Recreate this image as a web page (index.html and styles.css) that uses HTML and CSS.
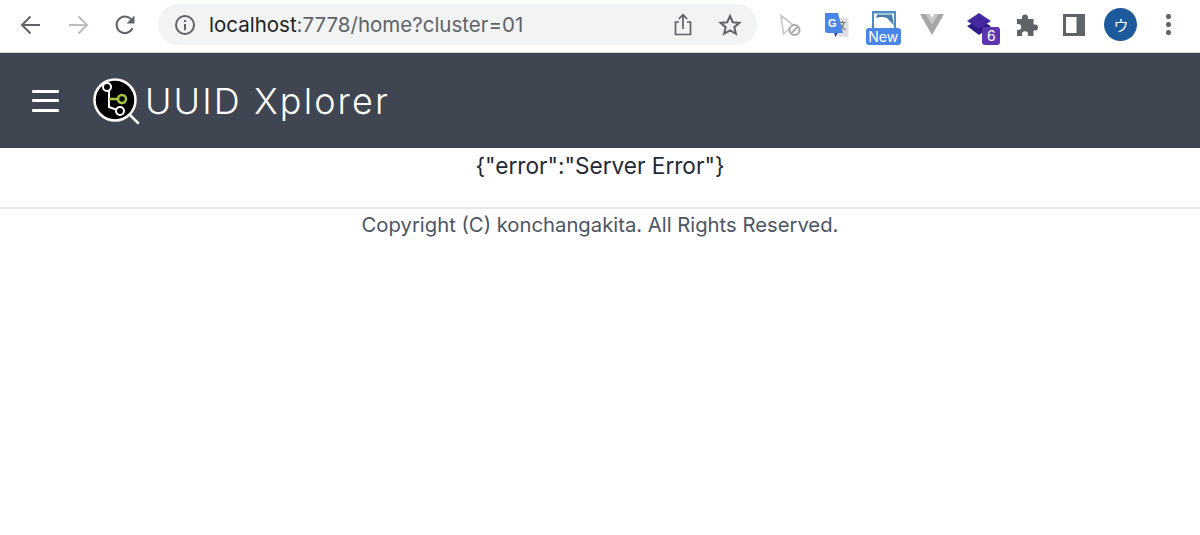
FILE: index.html
```html
<!DOCTYPE html>
<html lang="en">
<head>
    <meta charset="UTF-8">
    <meta name="viewport" content="width=device-width, initial-scale=1.0">
    <title>UUID Xplorer</title>
    <link rel="stylesheet" href="styles.css">
</head>
<body>
    <div class="toolbar">
        <div class="nav-buttons">
            <button class="tool-btn" aria-label="Back">
                <svg width="24" height="24" viewBox="0 0 24 24" fill="none" stroke="#5f6368" stroke-width="2"><path d="M21 12H3.500M11.500 3.500L3 12l8.500 8.500"/></svg>
            </button>
            <button class="tool-btn" aria-label="Forward">
                <svg width="24" height="24" viewBox="0 0 24 24" fill="none" stroke="#b9bbbe" stroke-width="2"><path d="M3 12h17.500M12.500 3.500L21 12l-8.500 8.500"/></svg>
            </button>
            <button class="tool-btn" aria-label="Reload">
                <svg width="24" height="24" viewBox="0 0 24 24" fill="none"><path d="M19.500 15.200A8.300 8.300 0 1 1 18 6.200" stroke="#5f6368" stroke-width="2"/><path d="M21.500 2.500v8h-8z" fill="#5f6368"/></svg>
            </button>
        </div>

        <div class="omnibox">
            <svg class="info-icon" width="22" height="22" viewBox="0 0 22 22" fill="none" stroke="#5f6368"><circle cx="11" cy="11" r="9" stroke-width="2"/><path d="M11 10v6" stroke-width="2"/><path d="M11 6v2" stroke-width="2"/></svg>
            <div class="url"><span class="url-host">localhost</span>:7778/home?cluster=01</div>
            <button class="omni-btn share-btn" aria-label="Share">
                <svg width="20" height="24" viewBox="0 0 20 24" fill="none" stroke="#5f6368" stroke-width="1.700"><path d="M6 9H2.500v12.500h15V9H14"/><path d="M10 16V2M5.800 6L10 1.800 14.200 6"/></svg>
            </button>
            <button class="omni-btn star-btn" aria-label="Bookmark">
                <svg width="24" height="24" viewBox="0 0 24 24" fill="none" stroke="#5f6368" stroke-width="2"><path d="M12 3l2.700 6.200 6.700.6-5.100 4.400 1.600 6.600L12 17.300l-5.900 3.500 1.600-6.600-5.100-4.400 6.700-.6z"/></svg>
            </button>
        </div>

        <div class="extensions">
            <div class="ext">
                <svg width="24" height="24" viewBox="0 0 24 24" fill="none"><path d="M3 2.500L19 15l-7.500.5L5.500 21z" stroke="#c4c6c8" stroke-width="1.600" fill="#fff"/><circle cx="16.500" cy="17" r="5" fill="#fff" stroke="#a8aaad" stroke-width="2"/><path d="M13.500 20l6-6" stroke="#a8aaad" stroke-width="2"/></svg>
            </div>
            <div class="ext">
                <svg width="26" height="26" viewBox="0 0 26 26"><path d="M13 6h11.500v19H15z" fill="#dfe1e3"/><path d="M15.500 10.500h6M18.500 9v1.500M20 10.500c-.8 3.500-2.500 6-5 7.500M17 13c.8 2 2.300 3.800 4.500 5" fill="none" stroke="#777" stroke-width="1.200"/><path d="M1 1h13l5 20H3.500a2.500 2.500 0 0 1-2.500-2.500z" fill="#4a86e8"/><path d="M14 21l-2.500 4.500L10 21z" fill="#3c56b8"/><text class="translate-g" x="4" y="14.500">G</text></svg>
            </div>
            <div class="ext">
                <svg class="slide-icon" width="24" height="18" viewBox="0 0 24 18"><path d="M0 0h24v18H0z" fill="#4f8cc0"/><path d="M2 2.500h20V18H2z" fill="#fff"/><path d="M5 3.500h15l2 11-7-7.500C11 5.500 7 6 4 7z" fill="#4a7ea8"/></svg>
                <span class="new-badge">New</span>
            </div>
            <div class="ext">
                <svg width="24" height="21" viewBox="0 0 24 21"><path d="M0 0h6l6 10L18 0h6L12 21z" fill="#a4a6a8"/><path d="M6 0h3.800L12 4l2.200-4H18l-6 10z" fill="#c6c8ca"/></svg>
            </div>
            <div class="ext">
                <svg class="stack-icon" width="26" height="26" viewBox="0 0 26 26"><path d="M1 14l12-6 12 6-12 9z" fill="#2c1a84"/><path d="M1 9l12-8 12 8-12 8z" fill="#4527a0"/></svg>
                <span class="count-badge">6</span>
            </div>
            <div class="ext">
                <svg class="puzzle-icon" width="24" height="24" viewBox="0 0 24 24"><path d="M9 1.500a3 3 0 0 1 3 3V6h5.500v5.500H19a3 3 0 0 1 0 6h-1.500V23h-5.500v-1.700a3 3 0 0 0-6 0V23H1v-6h1.200a3 3 0 0 0 0-6H1V6h5V4.500a3 3 0 0 1 3-3z" fill="#5f6368"/></svg>
            </div>
            <div class="ext">
                <svg width="22" height="22" viewBox="0 0 22 22"><path d="M0 0h22v22H0z" fill="#5f6368"/><path d="M3 3h10.500v16H3z" fill="#fff"/></svg>
            </div>
            <div class="ext">
                <div class="avatar">ウ</div>
            </div>
            <div class="ext">
                <div class="kebab"><span></span><span></span><span></span></div>
            </div>
        </div>
    </div>

    <header class="app-header">
        <button class="menu-btn" aria-label="Menu"><span></span><span></span><span></span></button>
        <svg class="logo" width="50" height="50" viewBox="0 0 50 50" fill="none">
            <path d="M36 36l10 10" stroke="#fff" stroke-width="2.500" stroke-linecap="round"/>
            <circle cx="23" cy="23" r="20.500" fill="#000" stroke="#fff" stroke-width="2.500"/>
            <path d="M17 12v18l11 4" stroke="#fff" stroke-width="2"/>
            <path d="M17 22h10" stroke="#a5c63b" stroke-width="2.500"/>
            <circle cx="15" cy="10" r="4" fill="#000" stroke="#fff" stroke-width="2"/>
            <circle cx="30" cy="22" r="4" fill="#000" stroke="#a5c63b" stroke-width="2.500"/>
            <circle cx="28" cy="34" r="4" fill="#000" stroke="#fff" stroke-width="2"/>
        </svg>
        <div class="brand">UUID Xplorer</div>
    </header>

    <main class="content">{"error":"Server Error"}</main>
    <footer class="footer">Copyright (C) konchangakita. All Rights Reserved.</footer>
</body>
</html>
```

FILE: styles.css
```css
* {
    margin: 0;
    padding: 0;
    box-sizing: border-box;
}

body {
    font-family: Inter, "Noto Sans", sans-serif;
    background: #fff;
    overflow: hidden;
}

button {
    border: none;
    background: none;
}

.toolbar {
    display: flex;
    align-items: center;
    height: 53px;
    padding-left: 7px;
    padding-bottom: 3px;
    background: #fff;
    border-bottom: 1px solid #d3d5d8;
}

.nav-buttons {
    display: flex;
}

.tool-btn {
    display: flex;
    align-items: center;
    justify-content: center;
    width: 47px;
}

.omnibox {
    display: flex;
    align-items: center;
    width: 599px;
    height: 41px;
    margin-left: 10px;
    margin-right: 9px;
    padding-left: 16px;
    background: #f1f3f4;
    border-radius: 21px;
}

.url {
    flex: 1;
    margin-left: 13px;
    font-size: 20.500px;
    color: #5f6368;
    white-space: nowrap;
}

.url-host {
    color: #202124;
}

.omni-btn {
    display: flex;
    align-items: center;
    justify-content: center;
}

.share-btn {
    width: 20px;
    margin-right: 25px;
}

.star-btn {
    width: 24px;
    margin-right: 15px;
}

.extensions {
    display: flex;
}

.ext {
    position: relative;
    display: flex;
    align-items: center;
    justify-content: center;
    width: 47.33px;
    height: 40px;
}

.translate-g {
    font-family: "Liberation Sans", sans-serif;
    font-size: 11px;
    font-weight: 700;
    fill: #fff;
}

.slide-icon {
    margin-bottom: 9px;
}

.new-badge {
    position: absolute;
    left: 5px;
    top: 23px;
    width: 35px;
    height: 17px;
    background: #4a86e8;
    border-radius: 3px;
    color: #fff;
    font-size: 14px;
    line-height: 17px;
    text-align: center;
}

.count-badge {
    position: absolute;
    left: 27px;
    top: 22px;
    width: 18px;
    height: 18px;
    background: #5e35b1;
    border-radius: 3px;
    color: #fff;
    font-size: 14px;
    line-height: 18px;
    text-align: center;
}

.puzzle-icon {
    margin-left: 3px;
}

.avatar {
    width: 33px;
    height: 33px;
    background: #1c5a9c;
    border-radius: 50%;
    color: #fff;
    font-family: "Noto Sans CJK JP", sans-serif;
    font-size: 15px;
    line-height: 33px;
    text-align: center;
}

.kebab {
    display: flex;
    flex-direction: column;
    gap: 3.500px;
}

.kebab span {
    width: 4.500px;
    height: 4.500px;
    background: #5f6368;
    border-radius: 50%;
}

.app-header {
    display: flex;
    align-items: center;
    height: 95px;
    padding-left: 32px;
    background: #404552;
}

.menu-btn {
    display: flex;
    flex-direction: column;
    gap: 6.500px;
    width: 27px;
    margin-right: 33px;
}

.menu-btn span {
    height: 3px;
    background: #fff;
    border-radius: 1px;
}

.logo {
    flex-shrink: 0;
    margin-top: 3px;
}

.brand {
    margin-left: 3px;
    font-family: Inter, sans-serif;
    font-size: 36px;
    font-weight: 300;
    letter-spacing: 2.100px;
    color: #fff;
    white-space: nowrap;
}

.content {
    height: 61px;
    padding-top: 4px;
    border-bottom: 2px solid #e5e7eb;
    font-size: 22.600px;
    line-height: 28px;
    color: #1f2937;
    text-align: center;
}

.footer {
    padding-top: 3px;
    font-size: 20.260px;
    line-height: 26px;
    color: #4b5563;
    text-align: center;
}
```
